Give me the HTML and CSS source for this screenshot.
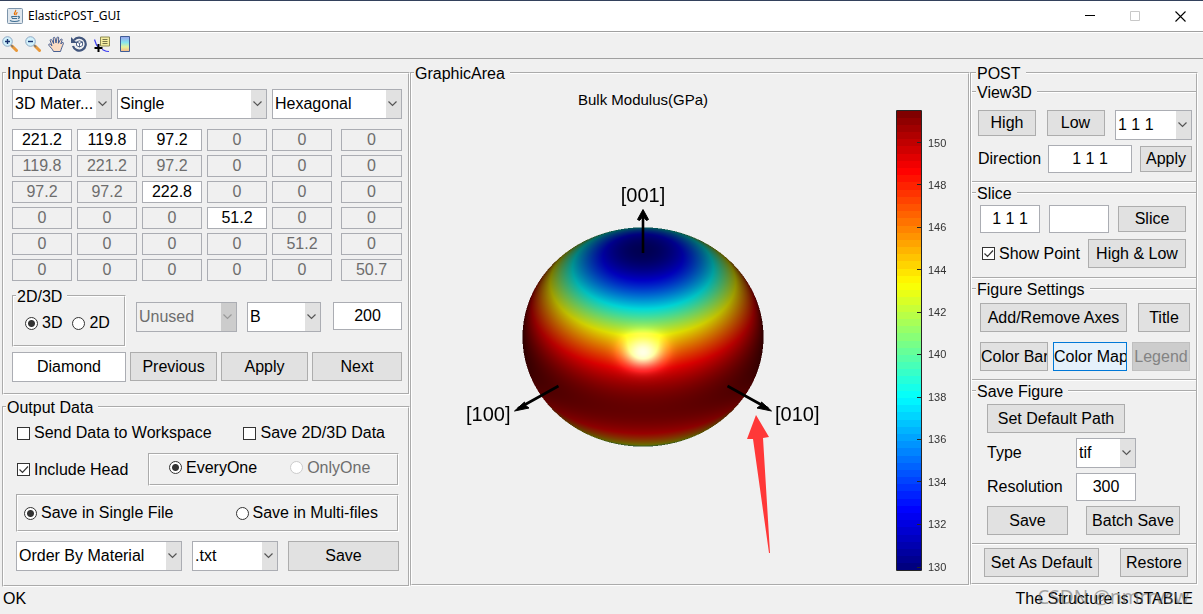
FILE: index.html
```html
<!DOCTYPE html>
<html lang="en">
<head>
<meta charset="utf-8">
<title>ElasticPOST_GUI</title>
<link rel="stylesheet" href="styles.css">
</head>
<body>
<header class="titlebar">
  <svg class="app-icon" width="16" height="16" viewBox="0 0 16 16" aria-hidden="true">
    <rect x=".5" y=".5" width="15" height="15" rx="1" fill="#dfe7ee" stroke="#7d95ab"/>
    <path d="M8.500 2c1.500 1.500-2.500 2.500-.8 5M10.500 4.500c-1.500.8-2 1.500-1.200 2.800" fill="none" stroke="#e76f00" stroke-width="1.200"/>
    <path d="M4.500 8.500h6M5 10.500h5M11 8.500c2-.5 1.800 1.500 0 2M3 12.500c2 1.300 7 1.300 9.500 0M4.500 8.500c.3 1.500.8 2 1.500 2" fill="none" stroke="#3f6f93" stroke-width="1.100"/>
  </svg>
  <h1 class="app-title">ElasticPOST_GUI</h1>
  <button class="win-btn" type="button" aria-label="Minimize"><svg width="11" height="11" viewBox="0 0 11 11"><path d="M0 4.500h10" stroke="#000"/></svg></button>
  <button class="win-btn" type="button" aria-label="Maximize" disabled><svg width="11" height="11" viewBox="0 0 11 11"><path d="M.5 .5h9v9h-9z" fill="none" stroke="#c8c8c8"/></svg></button>
  <button class="win-btn" type="button" aria-label="Close"><svg width="11" height="11" viewBox="0 0 11 11"><path d="M.5 .5l10 10M10.500 .5l-10 10" stroke="#000" stroke-width="1.100"/></svg></button>
</header>

<nav class="toolbar" aria-label="Figure tools">
  <button class="tool" type="button" aria-label="Zoom in"><svg width="16" height="16" viewBox="0 0 16 16"><path d="M10 10l4.500 4.500" stroke="#e8983a" stroke-width="3" stroke-linecap="round"/><path d="M9 9l2 2" stroke="#777" stroke-width="1.500"/><circle cx="5.500" cy="5.500" r="4.800" fill="#d2f1fb" stroke="#8fa9c4"/><path d="M3 5.500h5M5.500 3v5" stroke="#16306e" stroke-width="1.400"/></svg></button>
  <button class="tool" type="button" aria-label="Zoom out"><svg width="16" height="16" viewBox="0 0 16 16"><path d="M10 10l4.500 4.500" stroke="#e8983a" stroke-width="3" stroke-linecap="round"/><path d="M9 9l2 2" stroke="#777" stroke-width="1.500"/><circle cx="5.500" cy="5.500" r="4.800" fill="#d2f1fb" stroke="#8fa9c4"/><path d="M3 5.500h5" stroke="#16306e" stroke-width="1.400"/></svg></button>
  <button class="tool" type="button" aria-label="Pan"><svg width="16" height="16" viewBox="0 0 16 16"><path d="M5.500 15.500C4.500 13 2.500 11.500.8 9.200.3 8 1.600 7.600 2.600 8.500L4 9.800 2.200 4.600C2 3.300 3.500 3 4 4.200L5.600 7.500 5.300 2.200C5.400 1 6.900 1 7.100 2.200L8 7 9 1.700C9.300.5 10.800.8 10.700 2L10.400 7.300 12.500 3.500C13.200 2.500 14.400 3 14 4.200L12.800 8 14 6.800C14.900 6 15.900 6.700 15.300 7.800 14.500 10 13.500 12 12.500 15.500z" fill="#fbdcc3" stroke="#34508a" stroke-width=".9"/></svg></button>
  <button class="tool" type="button" aria-label="Rotate 3D"><svg width="16" height="16" viewBox="0 0 16 16"><path d="M3 4.200A6.500 6.500 0 1 1 2 10" fill="none" stroke="#42567d" stroke-width="2.200"/><path d="M0 1v6h6z" fill="#42567d"/><path d="M8.500 4.800l3 1.200v3.500l-3 1.500-3-1.500V6zM5.500 6l3 1.400 3-1.400M8.500 7.400V11" fill="#fff" stroke="#42567d" stroke-width=".9"/></svg></button>
  <button class="tool" type="button" aria-label="Data cursor"><svg width="16" height="17" viewBox="0 0 16 17"><path d="M.5 3.500c1 4 2 6 4 8M8 13.500c2 0 2 2 7 2" fill="none" stroke="#3a3af0" stroke-width="1.200"/><path d="M6.500 1h9v9h-9z" fill="#f4eda0" stroke="#8f8c53"/><path d="M8.500 3.500h5M8.500 5.500h5M8.500 7.500h5" stroke="#77754a"/><path d="M4.500 8v8M.5 12h8" stroke="#000" stroke-width="2"/></svg></button>
  <button class="tool" type="button" aria-label="Insert colorbar"><svg width="16" height="16" viewBox="0 0 16 16"><defs><linearGradient id="mini" x1="0" y1="0" x2="0" y2="1"><stop offset="0" stop-color="#9aa0ee"/><stop offset=".4" stop-color="#86e6ee"/><stop offset=".7" stop-color="#e8f39a"/><stop offset="1" stop-color="#f6b58c"/></linearGradient></defs><path d="M3.500 .5h9v15h-9z" fill="url(#mini)" stroke="#3f5d96"/></svg></button>
</nav>

<main class="workspace">
  <div class="left">
    <fieldset class="panel">
      <legend>Input Data</legend>
      <div class="input-body">
        <div class="kinds">
          <select aria-label="Material kind"><option>3D Mater...</option></select>
          <select aria-label="Mode"><option>Single</option></select>
          <select aria-label="Crystal system"><option>Hexagonal</option></select>
        </div>
        <div class="matrix" role="group" aria-label="Stiffness matrix">
          <input aria-label="C11" value="221.2"><input aria-label="C12" value="119.8"><input aria-label="C13" value="97.2"><input aria-label="C14" value="0" disabled><input aria-label="C15" value="0" disabled><input aria-label="C16" value="0" disabled>
          <input aria-label="C21" value="119.8" disabled><input aria-label="C22" value="221.2" disabled><input aria-label="C23" value="97.2" disabled><input aria-label="C24" value="0" disabled><input aria-label="C25" value="0" disabled><input aria-label="C26" value="0" disabled>
          <input aria-label="C31" value="97.2" disabled><input aria-label="C32" value="97.2" disabled><input aria-label="C33" value="222.8"><input aria-label="C34" value="0" disabled><input aria-label="C35" value="0" disabled><input aria-label="C36" value="0" disabled>
          <input aria-label="C41" value="0" disabled><input aria-label="C42" value="0" disabled><input aria-label="C43" value="0" disabled><input aria-label="C44" value="51.2"><input aria-label="C45" value="0" disabled><input aria-label="C46" value="0" disabled>
          <input aria-label="C51" value="0" disabled><input aria-label="C52" value="0" disabled><input aria-label="C53" value="0" disabled><input aria-label="C54" value="0" disabled><input aria-label="C55" value="51.2" disabled><input aria-label="C56" value="0" disabled>
          <input aria-label="C61" value="0" disabled><input aria-label="C62" value="0" disabled><input aria-label="C63" value="0" disabled><input aria-label="C64" value="0" disabled><input aria-label="C65" value="0" disabled><input aria-label="C66" value="50.7" disabled>
        </div>
        <div class="dimension-row">
          <fieldset class="panel dimension">
            <legend>2D/3D</legend>
            <div class="dimension-body">
              <label class="choice"><input type="radio" name="dim" checked>3D</label>
              <label class="choice"><input type="radio" name="dim">2D</label>
            </div>
          </fieldset>
          <select aria-label="Secondary property" disabled><option>Unused</option></select>
          <select aria-label="Property"><option>B</option></select>
          <input aria-label="Grid points" value="200">
        </div>
        <div class="nav-row">
          <input aria-label="Material name" value="Diamond">
          <button type="button">Previous</button>
          <button type="button">Apply</button>
          <button type="button">Next</button>
        </div>
      </div>
    </fieldset>

    <fieldset class="panel">
      <legend>Output Data</legend>
      <div class="output-body">
        <div class="checks">
          <label class="choice"><input type="checkbox">Send Data to Workspace</label>
          <label class="choice"><input type="checkbox">Save 2D/3D Data</label>
        </div>
        <div class="head-row">
          <label class="choice"><input type="checkbox" checked>Include Head</label>
          <div class="etched head-group">
            <label class="choice"><input type="radio" name="head" checked>EveryOne</label>
            <label class="choice off"><input type="radio" name="head" disabled>OnlyOne</label>
          </div>
        </div>
        <div class="etched file-group">
          <label class="choice"><input type="radio" name="file" checked>Save in Single File</label>
          <label class="choice"><input type="radio" name="file">Save in Multi-files</label>
        </div>
        <div class="save-row">
          <select aria-label="Order"><option>Order By Material</option></select>
          <select aria-label="File extension"><option>.txt</option></select>
          <button type="button">Save</button>
        </div>
      </div>
    </fieldset>
  </div>

  <fieldset class="panel graphic">
    <legend>GraphicArea</legend>
    <svg class="plot" viewBox="412 82 556 502" role="img" aria-label="Bulk modulus surface">
      <text class="plot-title" x="643" y="105" text-anchor="middle">Bulk Modulus(GPa)</text>
      <foreignObject x="521" y="225" width="244" height="224"><canvas id="surface" class="surface" width="244" height="224"></canvas></foreignObject>
      <g stroke="#000" stroke-width="2.600" fill="none">
        <path d="M643 253V213M558.500 386L518 408.500M727.500 386L768 408.500"/>
      </g>
      <path d="M643 209.500l5.500 10-2 1-3.500-4-3.500 4-2-1z" stroke="#000"/>
      <path d="M514.500 411l10-9 .5 3 4 3z" stroke="#000"/>
      <path d="M771.500 411l-10-9-.5 3-4 3z" stroke="#000"/>
      <g class="axis-label">
        <text x="643" y="202" text-anchor="middle">[001]</text>
        <text x="466" y="421">[100]</text>
        <text x="775" y="421">[010]</text>
      </g>
      <path d="M756 415l13 22-6 1 7 115h-1L753 439l-6 0z" fill="#ff3838"/>
      <g id="colorbar"></g>
      <path d="M896.500 110.500h25v460h-25z" fill="none" stroke="#262626"/>
      <path d="M917 142.500h4M917 184.500h4M917 227.500h4M917 269.500h4M917 312.500h4M917 354.500h4M917 397.500h4M917 439.500h4M917 481.500h4M917 524.500h4M917 567.500h4" stroke="#262626"/>
      <g class="tick">
        <text x="928" y="147">150</text><text x="928" y="189">148</text><text x="928" y="231">146</text><text x="928" y="274">144</text><text x="928" y="316">142</text><text x="928" y="358">140</text><text x="928" y="401">138</text><text x="928" y="443">136</text><text x="928" y="486">134</text><text x="928" y="528">132</text><text x="928" y="571">130</text>
      </g>
    </svg>
  </fieldset>

  <fieldset class="panel post">
    <legend>POST</legend>
    <fieldset class="panel section">
      <legend>View3D</legend>
      <div class="view-body">
        <div class="view-top">
          <button type="button">High</button>
          <button type="button">Low</button>
          <select aria-label="View direction preset"><option>1 1 1</option></select>
        </div>
        <div class="view-direction">
          <label for="direction">Direction</label>
          <input id="direction" value="1 1 1">
          <button type="button">Apply</button>
        </div>
      </div>
    </fieldset>
    <fieldset class="panel section">
      <legend>Slice</legend>
      <div class="slice-body">
        <div class="slice-top">
          <input aria-label="Slice plane" value="1 1 1">
          <input aria-label="Slice offset" value="">
          <button type="button">Slice</button>
        </div>
        <div class="slice-bottom">
          <label class="choice"><input type="checkbox" checked>Show Point</label>
          <button type="button">High &amp; Low</button>
        </div>
      </div>
    </fieldset>
    <fieldset class="panel section">
      <legend>Figure Settings</legend>
      <div class="figure-body">
        <div class="figure-top">
          <button type="button">Add/Remove Axes</button>
          <button type="button">Title</button>
        </div>
        <div class="figure-bottom">
          <button type="button">Color Bar</button>
          <button type="button" class="hot">Color Map</button>
          <button type="button" disabled>Legend</button>
        </div>
      </div>
    </fieldset>
    <fieldset class="panel section">
      <legend>Save Figure</legend>
      <div class="export-body">
        <button type="button" class="path-btn">Set Default Path</button>
        <div class="export-field">
          <label for="type">Type</label>
          <select id="type"><option>tif</option></select>
        </div>
        <div class="export-field">
          <label for="resolution">Resolution</label>
          <input id="resolution" value="300">
        </div>
        <div class="export-actions">
          <button type="button">Save</button>
          <button type="button">Batch Save</button>
        </div>
      </div>
    </fieldset>
    <div class="defaults">
      <button type="button">Set As Default</button>
      <button type="button">Restore</button>
    </div>
  </fieldset>
</main>

<footer class="status">
  <span>OK</span>
  <span class="verdict">The Structure is STABLE<span class="watermark">CSDN @nmrrvsw</span></span>
</footer>
<script src="surface.js"></script>
</body>
</html>
```
FILE: styles.css
```css
* { box-sizing: border-box; }

body {
  margin: 0;
  min-height: 100vh;
  background: #f0f0f0;
  color: #000;
  font: 16px/18px "Liberation Sans", Arial, sans-serif;
}

/* window chrome */
.titlebar {
  display: flex;
  align-items: center;
  height: 32px;
  padding-left: 7px;
  background: #fff;
  border-top: 1px solid #33415c;
  border-bottom: 1px solid #a0a0a0;
}
.app-title {
  flex: 1;
  margin: 0 0 0 5px;
  font: 12px/16px "Noto Sans", "Open Sans", sans-serif;
}
.win-btn {
  display: grid;
  place-items: center;
  width: 45px;
  height: 30px;
  background: none;
  border: 0;
}
.win-btn:disabled { background: none; }
.toolbar {
  display: flex;
  align-items: center;
  gap: 7px;
  height: 27px;
  padding: 0 2px 3px;
  border-top: 1px solid #fff;
  border-bottom: 1px solid #a0a0a0;
}
.tool {
  display: block;
  width: 16px;
  height: 17px;
  padding: 0;
  background: none;
  border: 0;
}
.tool svg { display: block; }

/* shared controls */
button, input, select {
  min-width: 0;
  margin: 0;
  font: inherit;
  color: inherit;
  border-radius: 0;
}
button {
  height: 29px;
  padding: 0;
  white-space: nowrap;
  overflow: hidden;
  background: #e1e1e1;
  border: 1px solid #adadad;
}
button:disabled { background: #ccc; border-color: #bfbfbf; color: #838383; }
button.hot { background: #e5f1fb; border-color: #0078d7; }
input {
  height: 28px;
  padding: 0;
  text-align: center;
  background: #fff;
  border: 1px solid #abadb3;
}
input:disabled { background: #f0f0f0; color: #6d6d6d; }
select {
  height: 30px;
  padding: 0 16px 0 2px;
  appearance: none;
  border: 1px solid #abadb3;
  background:
    url("data:image/svg+xml,%3Csvg xmlns='http://www.w3.org/2000/svg' width='16' height='8'%3E%3Cpath d='M3.500 1.500l4 4 4-4' fill='none' stroke='%23555' stroke-width='1.200'/%3E%3C/svg%3E") right center no-repeat,
    linear-gradient(#e1e1e1, #e1e1e1) right / 15px 100% no-repeat,
    #fff;
}
select:disabled {
  opacity: 1;
  color: #6d6d6d;
  background:
    url("data:image/svg+xml,%3Csvg xmlns='http://www.w3.org/2000/svg' width='16' height='8'%3E%3Cpath d='M3.500 1.500l4 4 4-4' fill='none' stroke='%23999' stroke-width='1.200'/%3E%3C/svg%3E") right center no-repeat,
    linear-gradient(#ccc, #ccc) right / 15px 100% no-repeat,
    #f0f0f0;
}
.choice { display: flex; align-items: center; gap: 4px; white-space: nowrap; }
.choice.off { color: #6d6d6d; }
input[type="checkbox"], input[type="radio"] {
  flex: none;
  width: 13px;
  height: 13px;
  appearance: none;
  border: 1px solid #333;
}
input[type="radio"] { border-radius: 50%; }
input[type="radio"]:checked { background: radial-gradient(circle, #333 3px, #fff 4px); }
input[type="radio"]:disabled { background: #fff; border-color: #ccc; }
input[type="checkbox"]:checked {
  background: #fff url("data:image/svg+xml,%3Csvg xmlns='http://www.w3.org/2000/svg' width='11' height='11'%3E%3Cpath d='M1.500 5.500l3 3 5.500-6' fill='none' stroke='%23333' stroke-width='1.200'/%3E%3C/svg%3E") center no-repeat;
}
.panel {
  min-width: 0;
  margin: 0;
  padding: 0 0 0 2px;
  border: 2px groove #fff;
}
.panel > legend { height: 18px; padding: 0 5px 0 1px; line-height: 20px; }
.etched { display: flex; border: 2px groove #fff; }

/* main layout */
.workspace {
  display: grid;
  grid-template-columns: 408px minmax(0, 1fr) 228px;
  align-items: start;
  padding: 5px 5px 0 2px;
}
.left { display: grid; gap: 3px; }

.input-body { padding: 7px 6px 12px 6px; }
.kinds { display: grid; grid-template-columns: 10fr 15fr 13fr; gap: 5px; }
.matrix {
  display: grid;
  grid-template-columns: repeat(5, 60px) 1fr;
  gap: 4px 5px;
  margin: 10px 0 6px;
}
.matrix input { width: 100%; height: 22px; }
.matrix input:nth-child(6n) { width: auto; margin-left: 4px; }
.dimension-row {
  display: grid;
  grid-template-columns: 114px 101px 74px 1fr;
  gap: 10px;
}
.dimension-row > select, .dimension-row > input { margin-top: 15px; }
.dimension-row > input { margin-left: 2px; }
.dimension { height: 60px; }
.dimension-body { display: flex; gap: 10px; padding: 9px 0 0 9px; }
.nav-row {
  display: grid;
  grid-template-columns: 114px 87px 87px 1fr;
  gap: 4px;
  margin-top: 5px;
}
.nav-row input { height: 30px; }

.input-body { padding-bottom: 11px; }
.output-body { padding: 8px 9px 14px 10px; }
.checks { display: flex; justify-content: space-between; padding: 0 14px 0 1px; }
.head-row {
  display: grid;
  grid-template-columns: 1fr 251px;
  align-items: center;
  padding-left: 1px;
  margin: 11px 0 8px;
}
.head-group { gap: 33px; height: 33px; padding: 0 0 4px 19px; }
.file-group { gap: 62px; height: 38px; padding-left: 6px; }
.save-row {
  display: grid;
  grid-template-columns: 166px 86px 1fr;
  gap: 10px;
  margin-top: 9px;
}
.save-row button { height: 30px; }

.graphic { padding-left: 0; }
.graphic > legend { margin-left: 2px; }
.plot { display: block; width: 100%; height: auto; }
.surface { display: block; }
.plot-title { font-size: 15px; }
.axis-label { font-size: 20px; }
.tick { font-size: 11px; fill: #333; }

.post { padding-left: 0; }
.post > legend { margin-left: 4px; }
.section { margin-top: 1px; padding-left: 4px; border-width: 2px 0; }
.view-body { padding: 9px 4px 8px 2px; }
.view-top {
  display: grid;
  grid-template-columns: 58px 58px 77px;
  justify-content: space-between;
  align-items: start;
}
.view-top button { height: 26px; }
.view-direction {
  display: grid;
  grid-template-columns: 62px 1fr 52px;
  gap: 8px;
  align-items: center;
  margin-top: 5px;
}
.view-direction button { height: 26px; }
.slice-body { padding: 3px 10px 9px 4px; }
.slice-top {
  display: grid;
  grid-template-columns: 60px 60px 1fr;
  gap: 9px;
  align-items: center;
}
.slice-top button { height: 26px; }
.slice-bottom { display: flex; justify-content: space-between; padding-left: 2px; margin-top: 6px; }
.slice-bottom button { width: 98px; }
.figure-body { padding: 5px 6px 8px 4px; }
.figure-top { display: grid; grid-template-columns: 1fr 52px; gap: 11px; }
.figure-bottom {
  display: grid;
  grid-template-columns: 68px 1fr 58px;
  gap: 5px;
  margin-top: 10px;
}
.export-body { display: grid; gap: 5px; padding: 4px 16px 8px 11px; }
.path-btn { width: 138px; }
.export-field { display: grid; grid-template-columns: 89px 60px; align-items: center; }
.export-actions { display: flex; justify-content: space-between; }
.export-actions button:first-child { width: 81px; }
.export-actions button:last-child { width: 94px; }
.defaults { display: flex; justify-content: space-between; padding: 3px 8px 6px 12px; }
.defaults button:first-child { width: 115px; }
.defaults button:last-child { width: 68px; }

.status { display: flex; justify-content: space-between; padding: 3px 10px 0 3px; }
.verdict { position: relative; }
.watermark {
  position: absolute;
  right: 4px;
  top: -3px;
  color: rgba(110, 110, 110, 0.6);
  font: 19px/20px "Noto Sans", sans-serif;
  white-space: nowrap;
}
```
FILE: surface.js
```js
// Bulk modulus of a hexagonal crystal, seen along [111] with a headlight.
const MIN = 129.8, MAX = 151.5, SCALE = 120.5 / MAX;
const SIN = 1 / Math.sqrt(3), COS = Math.sqrt(2 / 3);

const clamp = v => Math.max(0, Math.min(1, v));
const jet = v => [clamp(1.5 - Math.abs(4 * v - 3)), clamp(1.5 - Math.abs(4 * v - 2)), clamp(1.5 - Math.abs(4 * v - 1))];
const modulus = n2 => 1 / (1 / MAX + (1 / MIN - 1 / MAX) * n2);

function field(x, y, t) {
  const z = y * COS + t * SIN, q = x * x + y * y + t * t;
  return Math.sqrt(q) - SCALE * modulus(q ? z * z / q : 0);
}

function shade(x, y) {
  if (x * x + y * y > 122 * 122) return null;
  let t = 122;
  while (t > -30 && field(x, y, t) > 0) t -= 2;
  if (t <= -30) return null;
  let a = t, b = t + 2;
  for (let i = 0; i < 12; i++) {
    const m = (a + b) / 2;
    if (field(x, y, m) > 0) b = m; else a = m;
  }
  t = a;
  const h = 0.01, f = field(x, y, t);
  const g = [field(x + h, y, t) - f, field(x, y + h, t) - f, field(x, y, t + h) - f];
  const n = clamp(g[2] / Math.hypot(...g));
  const z = y * COS + t * SIN;
  const r = modulus(z * z / (x * x + y * y + t * t));
  const light = 0.3 + 0.6 * n;
  const spec = 0.9 * Math.pow(Math.max(0, 2 * n * n - 1), 22);
  return jet((r - MIN) / (MAX - MIN)).map(c => clamp(c * light + spec) * 255);
}

const canvas = document.getElementById("surface");
const ctx = canvas.getContext("2d");
const img = ctx.createImageData(canvas.width, canvas.height);
for (let py = 0; py < canvas.height; py++) {
  for (let px = 0; px < canvas.width; px++) {
    const sum = [0, 0, 0];
    let hits = 0;
    for (const dx of [0.25, 0.75]) for (const dy of [0.25, 0.75]) {
      const c = shade(px + dx - 122, 112 - py - dy);
      if (c) { hits++; c.forEach((v, i) => sum[i] += v); }
    }
    if (hits) img.data.set([sum[0] / hits, sum[1] / hits, sum[2] / hits, hits * 63.75], (py * canvas.width + px) * 4);
  }
}
ctx.putImageData(img, 0, 0);

const bar = document.getElementById("colorbar");
const STEPS = 64, TOP = 110.5, HEIGHT = 460;
for (let i = 0; i < STEPS; i++) {
  const rect = document.createElementNS("http://www.w3.org/2000/svg", "rect");
  const rgb = jet(1 - i / (STEPS - 1)).map(c => Math.round(c * 255));
  const y = Math.round(TOP + HEIGHT * i / STEPS);
  rect.setAttribute("x", 897);
  rect.setAttribute("y", y);
  rect.setAttribute("width", 24);
  rect.setAttribute("height", Math.round(TOP + HEIGHT * (i + 1) / STEPS) - y);
  rect.setAttribute("fill", `rgb(${rgb})`);
  bar.append(rect);
}
```
